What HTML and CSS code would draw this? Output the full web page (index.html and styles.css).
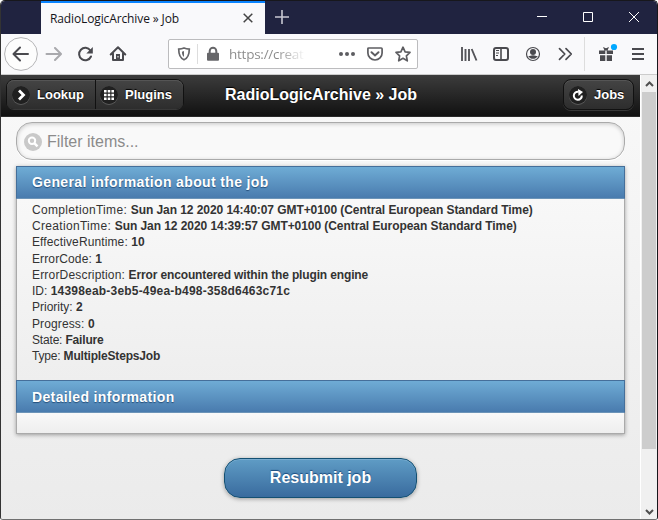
FILE: index.html
```html
<!DOCTYPE html>
<html lang="en">
<head>
<meta charset="utf-8">
<title>RadioLogicArchive » Job</title>
<link rel="stylesheet" href="styles.css">
</head>
<body>
<div class="window">
  <div class="tabs">
    <div class="tab"><span class="tab-title">RadioLogicArchive » Job</span>
      <svg class="tab-close" width="10" height="10" viewBox="0 0 10 10"><path d="M.7.7l8.6 8.6M9.3.7L.7 9.3" stroke="#444" stroke-width="1.5"/></svg>
    </div>
    <svg class="plus" width="14" height="14" viewBox="0 0 14 14"><path d="M7 0v14M0 7h14" stroke="#c8c8d2" stroke-width="1.6"/></svg>
    <div class="controls">
      <svg width="46" height="32" viewBox="0 0 46 32"><path d="M18 15.500h10" stroke="#fff"/></svg>
      <svg width="46" height="32" viewBox="0 0 46 32"><path d="M18.500 11.500h9v9h-9z" stroke="#fff" fill="none"/></svg>
      <svg width="46" height="32" viewBox="0 0 46 32"><path d="M18 11l10 10M28 11L18 21" stroke="#fff"/></svg>
    </div>
  </div>
  <div class="nav">
    <svg class="back" width="34" height="34" viewBox="0 0 34 34"><circle cx="17" cy="17" r="16.400" fill="#fdfdfd" stroke="#b4b4b6"/><path d="M24 17H10M16 10.500L9.500 17l6.500 6.500" class="line"/></svg>
    <svg class="faded" width="32" height="32" viewBox="0 0 32 32"><path d="M9.500 16h14M18 10l6 6-6 6" class="line"/></svg>
    <svg width="32" height="32" viewBox="0 0 32 32"><path d="M22 18.500a6.200 6.200 0 1 1-.6-6" class="line"/><path d="M23.800 9v6.500h-6.500z" fill="#4a4a4f"/></svg>
    <svg width="32" height="32" viewBox="0 0 32 32"><path d="M9.700 16.500L17 9.300l7.300 7.200M12 15.500v6.600h10v-6.600" class="line"/><path d="M15 16h4v6h-4z" fill="#4a4a4f"/><path d="M17 18v1.500" stroke="#fff"/></svg>
    <div class="url">
      <svg width="28" height="28" viewBox="0 0 28 28"><path d="M15 8c-2 .8-3.500 1-5.300 1.100 0 5.600 1.200 9.100 5.300 10.700 4.100-1.600 5.300-5.100 5.300-10.700C18.500 9 17 8.800 15 8z" fill="none" stroke="#666669" stroke-width="1.700"/><path d="M15 11v6c-1.500-1-2-2.600-2.100-5.200z" fill="#666669"/></svg>
      <i class="url-line"></i>
      <svg width="28" height="28" viewBox="0 0 28 28"><path d="M10.700 14v-3a3.300 3.300 0 0 1 6.600 0v3" fill="none" stroke="#666669" stroke-width="2"/><rect x="8" y="12.700" width="12" height="8" rx="1" fill="#666669"/></svg>
      <span class="address">https://creat</span>
      <svg class="dots" width="28" height="28" viewBox="0 0 28 28"><g fill="#5d5d61"><circle cx="8" cy="14" r="2"/><circle cx="14" cy="14" r="2"/><circle cx="20" cy="14" r="2"/></g></svg>
      <svg width="28" height="28" viewBox="0 0 28 28"><path d="M7.800 8h12.400c.6 0 .9.300.9.900v4a7.100 7.100 0 0 1-14.200 0v-4c0-.6.300-.9.900-.9z" fill="none" stroke="#5d5d61" stroke-width="1.700"/><path d="M10.500 12.200l3.500 3.300 3.500-3.300" fill="none" stroke="#5d5d61" stroke-width="2" stroke-linecap="round"/></svg>
      <svg width="28" height="28" viewBox="0 0 28 28"><path d="M14 7.200l2.100 4.600 4.900.6-3.600 3.400.9 5-4.300-2.500-4.300 2.500.9-5L7 12.400l4.900-.6z" fill="none" stroke="#5d5d61" stroke-width="1.700" stroke-linejoin="round"/></svg>
    </div>
    <div class="actions">
      <svg width="32" height="32" viewBox="0 0 32 32"><path d="M9 9v14M12.500 11v12M16 11v12M18.700 11l4.800 11.500" stroke="#55555a" stroke-width="1.900" fill="none"/></svg>
      <svg width="32" height="32" viewBox="0 0 32 32"><rect x="9" y="10" width="14" height="12" rx="2" class="line"/><path d="M16 10v12" stroke="#4a4a4f" stroke-width="1.600"/><path d="M11 12.500h3M11 15h3M11 17.500h2" stroke="#4a4a4f"/></svg>
      <svg width="32" height="32" viewBox="0 0 32 32"><circle cx="16" cy="16" r="6.500" fill="none" stroke="#4a4a4f" stroke-width="1.200"/><circle cx="16" cy="14" r="3" fill="#4a4a4f"/><path d="M11.200 18c2 0 2.500-.8 4.800-.8s2.800.8 4.800.8c-1.200 2-3 2.800-4.800 2.800s-3.600-.8-4.800-2.800z" fill="#4a4a4f"/></svg>
      <svg width="32" height="32" viewBox="0 0 32 32"><path d="M10.500 10.700l5.300 5.300-5.300 5.300M17 10.700l5.300 5.300-5.300 5.300" class="line thin"/></svg>
      <i class="divider"></i>
      <svg width="32" height="32" viewBox="0 0 32 32"><path d="M9 12.500h6.300V16H9zM16.700 12.500H23V16h-6.300zM10 17.300h5.300V23H10zM16.700 17.300H22V23h-5.300zM13 9l3 1.300L19 9l-1.500 3.500h-3z" fill="#4a4a4f"/><circle cx="24" cy="9" r="3.100" fill="#00a8ff"/></svg>
      <svg width="32" height="32" viewBox="0 0 32 32"><path d="M10 11h12M10 16h12M10 21h12" stroke="#4a4a4f" stroke-width="2"/></svg>
    </div>
  </div>
  <div class="view">
    <div class="page">
      <header class="header">
        <div class="group">
          <a class="btn"><svg width="18" height="18" viewBox="0 0 18 18"><circle cx="9" cy="9" r="9" fill="#202020"/><path d="M7 4.500L11.500 9 7 13.500" fill="none" stroke="#fff" stroke-width="2.800"/></svg>Lookup</a>
          <a class="btn plugins"><svg width="18" height="18" viewBox="0 0 18 18"><circle cx="9" cy="9" r="9" fill="#202020"/><path d="M4 5.200h10M4 9h10M4 12.800h10" stroke="#fff" stroke-width="2.600" stroke-dasharray="2.600 1.100"/></svg>Plugins</a>
        </div>
        <h1>RadioLogicArchive » Job</h1>
        <a class="btn jobs"><svg width="18" height="18" viewBox="0 0 18 18"><circle cx="9" cy="9" r="9" fill="#202020"/><path d="M12.800 9.500A4 4 0 1 1 9.500 5.800" fill="none" stroke="#fff" stroke-width="2"/><path d="M9 3l5 3-4.500 4z" fill="#fff"/></svg>Jobs</a>
      </header>
      <main>
        <div class="filter"><svg width="18" height="18" viewBox="0 0 18 18"><circle cx="9" cy="9" r="9" fill="#c9c9c9"/><circle cx="8" cy="7.700" r="3.200" fill="none" stroke="#fff" stroke-width="2"/><path d="M10 9.800l3.500 3.500" stroke="#fff" stroke-width="2.400"/></svg>Filter items...</div>
        <ul class="list">
          <li class="bar">General information about the job</li>
          <li class="info">
            <div class="completed">CompletionTime: <b>Sun Jan 12 2020 14:40:07 GMT+0100 (Central European Standard Time)</b></div>
            <div class="completed">CreationTime: <b>Sun Jan 12 2020 14:39:57 GMT+0100 (Central European Standard Time)</b></div>
            <div class="loose">EffectiveRuntime: <b>10</b></div>
            <div class="loose">ErrorCode: <b>1</b></div>
            <div class="description">ErrorDescription: <b>Error encountered within the plugin engine</b></div>
            <div class="id">ID: <b>14398eab-3eb5-49ea-b498-358d6463c71c</b></div>
            <div>Priority: <b>2</b></div>
            <div class="loose">Progress: <b>0</b></div>
            <div class="tight">State: <b>Failure</b></div>
            <div class="tight">Type: <b>MultipleStepsJob</b></div>
          </li>
          <li class="bar second">Detailed information</li>
          <li class="empty"></li>
        </ul>
        <a class="submit">Resubmit job</a>
      </main>
    </div>
    <div class="scroll">
      <svg width="15" height="17" viewBox="0 0 15 17"><path d="M4 11l3.500-3.500L11 11" fill="none" stroke="#505050" stroke-width="2"/></svg>
      <div class="thumb"></div>
      <svg class="down" width="15" height="17" viewBox="0 0 15 17"><path d="M4 8l3.500 3.500L11 8" fill="none" stroke="#505050" stroke-width="2"/></svg>
    </div>
  </div>
</div>
</body>
</html>
```
FILE: styles.css
```css
* { box-sizing: border-box; }
body { margin: 0; background: #fff; font-family: "Liberation Sans", Arial, sans-serif; }
svg { display: block; flex: none; }
.window { width: 658px; height: 520px; display: flex; flex-direction: column; border: 1px solid #17171c; border-left-color: #333; border-bottom: 1px solid #707070; border-radius: 5px 5px 3px 3px; overflow: hidden; }
.tabs { height: 33px; flex: none; background: #202340; display: flex; padding-left: 40px; }
.tab { width: 224px; background: #f9f9fb; border-top: 2px solid #0a84ff; display: flex; align-items: center; justify-content: space-between; padding: 0 12px 1px 9px; }
.tab-title { font: 12px "Open Sans", "Noto Sans", sans-serif; color: #15141a; letter-spacing: -.12px; }
.plus { margin: 9px 0 0 10px; }
.controls { display: flex; margin-left: auto; }
.nav { height: 41px; flex: none; background: #f9f9fb; border-bottom: 1px solid #ccc; display: flex; align-items: center; padding: 0 3px; }
.line { fill: none; stroke: #4a4a4f; stroke-width: 2; stroke-linecap: round; stroke-linejoin: round; }
.thin { stroke-width: 1.7; }
.back { margin-right: -1px; }
.faded { opacity: .45; }
.url { width: 250px; height: 30px; margin-left: 35px; border: 1px solid #bcbcbe; border-radius: 2px; background: #fff; display: flex; align-items: center; }
.url-line { width: 1px; height: 20px; background: #ddd; margin-right: 1px; }
.address { width: 77px; margin-left: 2px; white-space: nowrap; font: 13.5px "Open Sans", "Noto Sans", sans-serif; letter-spacing: -.25px; color: transparent; background: linear-gradient(90deg, #888 62%, #fff 100%); background-clip: text; -webkit-background-clip: text; }
.dots { margin-left: 27px; }
.actions { margin-left: auto; display: flex; align-items: center; }
.divider { width: 1px; height: 34px; background: #ddd; margin: 0 5px 0 3px; }
.view { flex: 1; display: flex; min-height: 0; }
.page { width: 639px; background: linear-gradient(#f9f9f9, #ebebeb); }
.header { height: 42px; background: linear-gradient(#3c3c3c, #111); border-bottom: 1px solid #2a2a2a; display: grid; grid-template-columns: 178px 1fr 71px; align-items: center; padding: 0 6px 2px 5px; color: #fff; text-shadow: 0 -1px 1px #000; }
.group { display: flex; width: 178px; border: 1px solid #111; border-radius: 8px; }
.btn { height: 31px; display: flex; align-items: center; gap: 7px; padding-left: 5px; background: linear-gradient(#444, #2d2d2d); box-shadow: inset 0 1px #555, 0 1px #383838; font-weight: bold; font-size: 13px; color: #fff; }
.btn svg { border-radius: 50%; box-shadow: 0 1px #5a5a5a; }
.group .btn { height: 29px; width: 88px; border-radius: 7px 0 0 7px; }
.group .plugins { border-left: 1px solid #111; border-radius: 0 7px 7px 0; padding-left: 4px; }
.jobs { border: 1px solid #111; border-radius: 8px; }
h1 { margin: 0; font-size: 16px; text-align: center; padding-right: 105px; white-space: nowrap; }
main { padding: 5px 15px 0; }
.filter { height: 38px; border: 1px solid #aaa; border-radius: 16px; background: #f9f9f9; box-shadow: inset 0 1px 4px rgba(0,0,0,.2), 0 1px #fff; display: flex; align-items: center; gap: 5px; padding: 1px 0 0 7px; font-size: 16px; color: #8b8b8b; }
.list { list-style: none; margin: 6px 0 0; padding: 0; box-shadow: 0 1px 4px rgba(0,0,0,.35); }
.bar { height: 33px; border: 1px solid #456f9a; border-bottom-color: #6c94b8; background: linear-gradient(#6facd5, #497bae); padding: 0 15px; line-height: 30px; font-size: 14px; letter-spacing: .36px; font-weight: bold; color: #fff; text-shadow: 0 1px 1px #254f7a; }
.second { line-height: 32px; }
.info { height: 181px; padding: 3px 15px; border: solid #aaa; border-width: 0 1px; background: linear-gradient(#f8f8f8, #eee); font-size: 12px; line-height: 16.22px; color: #333; white-space: nowrap; }
.completed { letter-spacing: .32px; }
.completed b { letter-spacing: -.065px; }
.loose { letter-spacing: .12px; }
.description { letter-spacing: .18px; }
.description b { letter-spacing: -.14px; }
.id b { letter-spacing: .2px; }
.tight { letter-spacing: -.18px; }
.empty { height: 21px; border: 1px solid #aaa; border-top: 0; background: linear-gradient(#f9f9f9, #eee); }
.submit { width: 193px; height: 40px; margin: 24px auto 0; display: flex; align-items: center; justify-content: center; border: 1px solid #145072; border-radius: 16px; background: linear-gradient(#5f9cc5, #396b9e); box-shadow: inset 0 1px #79acd0, 0 1px 4px rgba(0,0,0,.35); color: #fff; font-size: 16px; font-weight: bold; text-shadow: 0 -1px 1px #194b7e; }
.scroll { width: 17px; padding: 0 1px; background: #f0f0f0; border-left: 1px solid #fff; display: flex; flex-direction: column; }
.thumb { height: 357px; background: #cdcdcd; }
.down { margin-top: auto; }
```
